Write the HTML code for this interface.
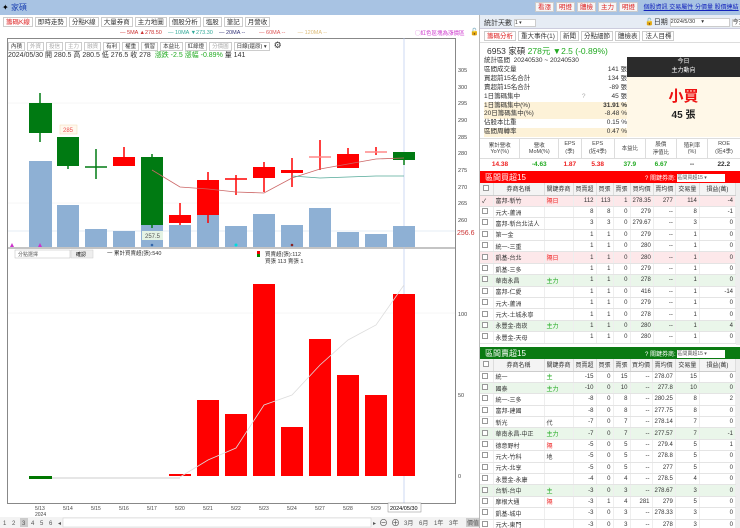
<!DOCTYPE html>
<html><head><meta charset="utf-8"><style>
*{margin:0;padding:0;box-sizing:border-box}
body{width:740px;height:528px;overflow:hidden;background:#fff;font-family:"Liberation Sans","Noto Sans CJK TC",sans-serif;font-size:7px;color:#333;position:relative}
.a{position:absolute}
.tab{display:inline-block;border:1px solid #ccc;padding:0 2px;height:10px;line-height:9px;margin-right:2px;font-size:6.5px;background:#fff}
table{border-collapse:collapse;font-size:6px}
.bt td{height:11.4px;border-bottom:1px solid #e4e4e4;border-right:1px solid #eee;text-align:right;padding:0 2px;white-space:nowrap}
.bt td.n{text-align:left}
.bt th{height:12px;font-weight:normal;border-right:1px solid #ddd;background:#f4f4f4;border-bottom:1px solid #ccc}
.pk td{background:#fde8ea}.gr td{background:#eaf6ea}
.cb{display:inline-block;width:6px;height:6px;border:1px solid #999;background:#fff}
</style></head><body>
<!-- top bars -->
<div class="a" style="left:0;top:0;width:740px;height:15px;background:#a8c3e3"></div>
<div class="a" style="left:2px;top:2px;font-size:8px;color:#000">✦ <span style="color:#1a3fb0">家碩</span></div>
<div class="a" style="left:0;top:15px;width:480px;height:13px;background:#fff;padding:2px 0 0 3px"><span class="tab" style="color:#d22">籌碼K線</span><span class="tab">即時走勢</span><span class="tab">分點K線</span><span class="tab">大量券商</span><span class="tab">主力地圖</span><span class="tab">個股分析</span><span class="tab">塩股</span><span class="tab">筆記</span><span class="tab">月營收</span></div>
<div class="a" style="left:120px;top:30px;font-size:5.5px;white-space:nowrap"><span style="color:#c33">— 5MA ▲278.50</span>&nbsp;&nbsp;&nbsp;&nbsp;<span style="color:#3a9">— 10MA ▼273.30</span>&nbsp;&nbsp;&nbsp;&nbsp;<span style="color:#337">— 20MA --</span>&nbsp;&nbsp;&nbsp;&nbsp;&nbsp;&nbsp;&nbsp;&nbsp;&nbsp;<span style="color:#d55">— 60MA --</span>&nbsp;&nbsp;&nbsp;&nbsp;&nbsp;&nbsp;&nbsp;&nbsp;<span style="color:#db7">— 120MA --</span></div>
<div class="a" style="left:415px;top:29px;font-size:5.5px;color:#c3c">◯紅色區塊為漲價區</div>
<div class="a" style="left:470px;top:28px;font-size:7px">🔓</div>
<svg class="a" style="left:0;top:0" width="480" height="528">
<rect x="7.5" y="38.5" width="448" height="465" fill="none" stroke="#888" stroke-width="1"/>
<line x1="7" y1="248" x2="456" y2="248" stroke="#888"/>
<line x1="404" y1="38" x2="404" y2="503" stroke="#b8c8ee" stroke-width="0.7"/>
<g stroke="#eee" stroke-width="0.5"><line x1="8" y1="103" x2="400" y2="103"/><line x1="8" y1="203" x2="400" y2="203"/><line x1="8" y1="313" x2="455" y2="313"/></g>
<line x1="8" y1="231" x2="455" y2="231" stroke="#cde" stroke-width="0.6"/>
<g fill="#8eb0d4">
<rect x="29" y="161" width="23" height="86"/><rect x="57" y="205" width="22" height="42"/><rect x="85" y="229" width="22" height="18"/><rect x="113" y="231" width="22" height="16"/><rect x="141" y="225" width="22" height="22"/><rect x="169" y="225" width="22" height="22"/><rect x="197" y="215" width="22" height="32"/><rect x="225" y="226" width="22" height="21"/><rect x="253" y="214" width="22" height="33"/><rect x="281" y="225" width="22" height="22"/><rect x="309" y="208" width="22" height="39"/><rect x="337" y="232" width="22" height="15"/><rect x="365" y="234" width="22" height="13"/><rect x="393" y="226" width="22" height="21"/>
</g>
<g stroke="#007a12" stroke-width="1.5" fill="#007a12">
<line x1="40" y1="93" x2="40" y2="142"/><rect x="29" y="103" width="23" height="30" stroke="none"/>
<line x1="68" y1="137" x2="68" y2="169"/><rect x="57" y="137" width="22" height="29" stroke="none"/>
<line x1="96" y1="149" x2="96" y2="179"/><line x1="85" y1="167" x2="107" y2="167"/>
<line x1="152" y1="154" x2="152" y2="228"/><rect x="141" y="157" width="22" height="68" stroke="none"/>
<line x1="404" y1="152" x2="404" y2="165"/><rect x="393" y="152" width="22" height="8" stroke="none"/>
</g>
<g stroke="#f00" stroke-width="1.5" fill="#f00">
<line x1="124" y1="147" x2="124" y2="166"/><rect x="113" y="157" width="22" height="9" stroke="none"/>
<line x1="180" y1="203" x2="180" y2="225"/><rect x="169" y="215" width="22" height="8" stroke="none"/>
<line x1="208" y1="172" x2="208" y2="223"/><rect x="197" y="180" width="22" height="35" stroke="none"/>
<line x1="236" y1="175" x2="236" y2="195"/><line x1="225" y1="179" x2="247" y2="179"/>
<line x1="264" y1="162" x2="264" y2="192"/><rect x="253" y="167" width="22" height="11" stroke="none"/>
<line x1="292" y1="158" x2="292" y2="187"/><rect x="281" y="170" width="22" height="3" stroke="none"/>
<line x1="320" y1="140" x2="320" y2="170"/><line x1="309" y1="157" x2="331" y2="157" stroke="#f88"/>
<line x1="348" y1="148" x2="348" y2="168"/><rect x="337" y="154" width="22" height="14" stroke="none"/>
<line x1="376" y1="147" x2="376" y2="155"/><line x1="365" y1="152" x2="387" y2="152" stroke="#f88"/>
</g>
<polyline points="152,170 180,187 208,189 236,192 264,193 292,178 320,169 348,164 376,159 404,158" fill="none" stroke="#c66" stroke-width="0.8"/>
<polyline points="292,176 320,178 348,177 376,176 404,176" fill="none" stroke="#5a9" stroke-width="0.7"/>
<rect x="60" y="125" width="17" height="9" fill="#fff8ee" stroke="#f3d9b0" stroke-width="0.5"/><text x="63" y="132" font-size="6" fill="#e55">285</text>
<rect x="142" y="231" width="21" height="9" fill="#e4f3e4"/><text x="145" y="238" font-size="6" fill="#555">257.5</text>
<g font-size="5.5" fill="#444"><text x="458" y="72">305</text><text x="458" y="89">300</text><text x="458" y="105">295</text><text x="458" y="122">290</text><text x="458" y="139">285</text><text x="458" y="155">280</text><text x="458" y="172">275</text><text x="458" y="189">270</text><text x="458" y="205">265</text><text x="458" y="222">260</text><text x="458" y="316">100</text><text x="458" y="397">50</text><text x="458" y="478">0</text></g>
<text x="457" y="235" font-size="7" fill="#c33">256.6</text>
<g fill="#c3c"><path d="M10,247 l2,-4 l2,4z"/><path d="M38,247 l2,-4 l2,4z"/></g>
<circle cx="152" cy="245" r="1.3" fill="#36a"/><circle cx="236" cy="245" r="1.5" fill="#0dd"/><circle cx="292" cy="245" r="1.3" fill="#822"/>
<rect x="15" y="250" width="55" height="8" fill="#fff" stroke="#bbb" stroke-width="0.5"/><text x="18" y="256" font-size="5" fill="#555">分點選擇</text>
<rect x="71" y="250" width="22" height="8" fill="#eee" stroke="#ccc" stroke-width="0.5"/><text x="76" y="256" font-size="5">確認</text>
<text x="107" y="255" font-size="5.5" fill="#333">一 累計買賣超(張):540</text>
<rect x="257" y="251" width="3" height="3" fill="#e00"/><rect x="257" y="254" width="3" height="3" fill="#080"/>
<text x="265" y="256" font-size="5.5" fill="#333">買賣超(張):112</text><text x="265" y="263" font-size="5.5" fill="#333">買張 113 賣張 1</text>
<g fill="#f00"><rect x="169" y="474" width="22" height="2"/><rect x="197" y="400" width="22" height="76"/><rect x="225" y="414" width="22" height="62"/><rect x="253" y="284" width="22" height="192"/><rect x="281" y="427" width="22" height="49"/><rect x="309" y="339" width="22" height="137"/><rect x="337" y="375" width="22" height="101"/><rect x="365" y="395" width="22" height="81"/><rect x="393" y="294" width="22" height="182"/></g>
<rect x="29" y="476" width="23" height="3" fill="#070"/>
<line x1="52" y1="478" x2="180" y2="478" stroke="#ccc" stroke-width="1"/>
<polyline points="180,477 208,460 236,448 264,405 292,395 320,365 348,340 376,325 404,285" fill="none" stroke="#ddd" stroke-width="0.8"/>
<g font-size="5" fill="#444"><text x="35" y="510">5/13</text><text x="35" y="516">2024</text><text x="63" y="510">5/14</text><text x="91" y="510">5/15</text><text x="119" y="510">5/16</text><text x="147" y="510">5/17</text><text x="175" y="510">5/20</text><text x="203" y="510">5/21</text><text x="231" y="510">5/22</text><text x="259" y="510">5/23</text><text x="287" y="510">5/24</text><text x="315" y="510">5/27</text><text x="343" y="510">5/28</text><text x="371" y="510">5/29</text></g>
<rect x="388" y="503" width="33" height="9" fill="#fff" stroke="#888" stroke-width="0.5"/><text x="390" y="510" font-size="5.5">2024/05/30</text>
<rect x="0" y="517" width="480" height="11" fill="#f3f3f3"/>
<g font-size="6" fill="#555"><text x="3" y="525">1</text><text x="12" y="525">2</text><rect x="20" y="518" width="8" height="9" fill="#ccc"/><text x="22" y="525">3</text><text x="31" y="525">4</text><text x="40" y="525">5</text><text x="49" y="525">6</text><text x="58" y="525">◂</text>
<rect x="63" y="518" width="308" height="9" fill="#fff" stroke="#ccc" stroke-width="0.5"/>
<text x="373" y="525">▸</text><text x="379" y="526" font-size="9">⊖</text><text x="391" y="526" font-size="9">⊕</text><text x="404" y="525">3月</text><text x="419" y="525">6月</text><text x="434" y="525">1年</text><text x="449" y="525">3年</text><rect x="466" y="518" width="14" height="9" fill="#ccc"/><text x="467" y="525">價值</text></g>
</svg>
<div class="a" style="left:7px;top:39px;width:230px;height:10px;padding:1px 0 0 1px;white-space:nowrap"><span class="tab" style="height:9px;font-size:5.5px">內積</span><span class="tab" style="height:9px;font-size:5.5px;color:#aaa">外資</span><span class="tab" style="height:9px;font-size:5.5px;color:#aaa">投信</span><span class="tab" style="height:9px;font-size:5.5px;color:#aaa">主力</span><span class="tab" style="height:9px;font-size:5.5px;color:#aaa">融資</span><span class="tab" style="height:9px;font-size:5.5px">有利</span><span class="tab" style="height:9px;font-size:5.5px">權重</span><span class="tab" style="height:9px;font-size:5.5px">慣習</span><span class="tab" style="height:9px;font-size:5.5px">本益比</span><span class="tab" style="height:9px;font-size:5.5px">紅綠燈</span><span class="tab" style="height:9px;font-size:5.5px;color:#aaa">分價圖</span><span class="tab" style="height:9px;font-size:5.5px">日線(還原) ▾</span> <span style="font-size:9px">⚙</span></div>
<div class="a" style="left:8px;top:50px;font-size:7px;white-space:nowrap">2024/05/30 開 280.5 高 280.5 低 276.5 收 278 &nbsp;<span style="color:#2a2">漲跌 -2.5 漲幅 -0.89%</span> 量 141</div>

<!-- RIGHT -->
<div class="a" style="left:535px;top:2px;font-size:6.5px;white-space:nowrap"><span class="tab" style="color:#d22;background:#f6f6f6">看漲</span><span class="tab" style="color:#d22;background:#f6f6f6">明燈</span><span class="tab" style="color:#d22;background:#f6f6f6">體檢</span><span class="tab" style="color:#d22;background:#f6f6f6">主力</span><span class="tab" style="color:#d22;background:#f6f6f6">明燈</span> &nbsp;<span style="color:#12b;text-decoration:underline;font-size:6px">個股資訊 交易屬性 分價量 股價連結</span></div>
<div class="a" style="left:480px;top:15px;width:260px;height:14px;background:#e6ecf4;border-bottom:1px solid #ccd"></div>
<div class="a" style="left:484px;top:18px;font-size:7px">統計天數 <span style="display:inline-block;width:22px;height:8px;background:#fff;border:1px solid #ccc;font-size:5px;vertical-align:middle">1 ▾</span></div>
<div class="a" style="left:645px;top:17px;font-size:7px;white-space:nowrap">🔓日期 <span style="display:inline-block;width:60px;height:9px;background:#fff;border:1px solid #ccc;font-size:5.5px;vertical-align:middle">2024/5/30 &nbsp;&nbsp;&nbsp;▾</span> <span style="font-size:6px;border:1px solid #ccc;background:#fff">今天</span></div>
<div class="a" style="left:484px;top:31px;white-space:nowrap"><span class="tab" style="color:#d22">籌碼分析</span><span class="tab">重大事件(1)</span><span class="tab">新聞</span><span class="tab">分點細節</span><span class="tab">體檢表</span><span class="tab">法人目標</span></div>
<div class="a" style="left:480px;top:42px;width:260px;height:15px;border-top:1px solid #ddd;padding:2px 0 0 7px;font-size:8.5px;white-space:nowrap">6953 家碩 <span style="color:#2a2">278元 ▼2.5 (-0.89%)</span></div>
<div class="a" style="left:484px;top:57px;width:143px;font-size:6.5px;line-height:8.9px">
<div>統計區間 &nbsp;20240530 ~ 20240530</div>
<div>區間成交量<span style="float:right">141 張</span></div>
<div>買超前15名合計<span style="float:right">134 張</span></div>
<div>賣超前15名合計<span style="float:right">-89 張</span></div>
<div>1日籌碼集中 <span style="color:#aaa;margin-left:60px">?</span><span style="float:right">45 張</span></div>
<div style="background:#fdf2d8">1日籌碼集中(%)<span style="float:right;font-weight:bold">31.91 %</span></div>
<div style="background:#fdf2d8">20日籌碼集中(%)<span style="float:right">-8.48 %</span></div>
<div>佔股本比重<span style="float:right">0.15 %</span></div>
<div style="background:#fdf2d8">區間周轉率<span style="float:right">0.47 %</span></div>
</div>
<div class="a" style="left:627px;top:57px;width:113px;height:20px;background:#2b2b2b;color:#fff;text-align:center;font-size:6px;line-height:9px;padding-top:1px">今日<br>主力動向</div>
<div class="a" style="left:627px;top:77px;width:113px;height:60px;background:#fff8e8;text-align:center"><div style="color:#e11;font-size:15px;font-weight:bold;margin-top:8px">小買</div><div style="font-size:10px;font-weight:bold;color:#222">45 張</div></div>
<div class="a" style="left:480px;top:138px;width:260px;height:33px;border-top:1px solid #ddd;font-size:5.5px">
<table style="width:260px;font-size:5.5px;text-align:center"><tr style="height:19px;color:#444"><td style="border-right:1px solid #ddd;border-bottom:1px solid #ddd">累計營收<br>YoY(%)</td><td style="border-right:1px solid #ddd;border-bottom:1px solid #ddd">營收<br>MoM(%)</td><td style="border-right:1px solid #ddd;border-bottom:1px solid #ddd">EPS<br>(季)</td><td style="border-right:1px solid #ddd;border-bottom:1px solid #ddd">EPS<br>(近4季)</td><td style="border-right:1px solid #ddd;border-bottom:1px solid #ddd">本益比</td><td style="border-right:1px solid #ddd;border-bottom:1px solid #ddd">股價<br>淨值比</td><td style="border-right:1px solid #ddd;border-bottom:1px solid #ddd">殖利率<br>(%)</td><td style="border-bottom:1px solid #ddd">ROE<br>(近4季)</td></tr>
<tr style="height:12px;font-size:6.5px;font-weight:bold"><td style="color:#e22">14.38</td><td style="color:#2a2">-4.63</td><td style="color:#e22">1.87</td><td style="color:#e22">5.38</td><td style="color:#2a2">37.9</td><td style="color:#2a2">6.67</td><td>--</td><td>22.2</td></tr></table></div>
<!-- buy table -->
<div class="a" style="left:480px;top:171px;width:260px;height:12px;background:#f00;color:#fff;font-size:8px;padding:1px 0 0 5px">區間買超15<span style="position:absolute;left:165px;top:2px;font-size:6px">? 關鍵券商: <span style="display:inline-block;width:48px;height:8px;background:#fff;color:#555;font-size:5px;vertical-align:middle">區間買超15 ▾</span></span></div>
<div class="a" style="left:480px;top:183px;width:256px;overflow:hidden;height:162px">
<table class="bt" style="width:256px"><colgroup><col style="width:13px"><col style="width:51px"><col style="width:29px"><col style="width:23px"><col style="width:17px"><col style="width:17px"><col style="width:22px"><col style="width:22px"><col style="width:24px"><col></colgroup>
<tr><th><span class="cb"></span></th><th>券商名稱</th><th>關鍵券商</th><th>買賣超</th><th>買張</th><th>賣張</th><th>買均價</th><th>賣均價</th><th>交易量</th><th>損益(萬)</th></tr>
<tr class="pk"><td class="n">✓</td><td class="n">富邦-新竹</td><td class="n" style="color:#e22">隔日</td><td>112</td><td>113</td><td>1</td><td>278.35</td><td>277</td><td>114</td><td>-4</td></tr>
<tr><td class="n"><span class="cb"></span></td><td class="n">元大-蘆洲</td><td></td><td>8</td><td>8</td><td>0</td><td>279</td><td>--</td><td>8</td><td>-1</td></tr>
<tr><td class="n"><span class="cb"></span></td><td class="n">富邦-新台北法人</td><td></td><td>3</td><td>3</td><td>0</td><td>279.67</td><td>--</td><td>3</td><td>0</td></tr>
<tr><td class="n"><span class="cb"></span></td><td class="n">第一金</td><td></td><td>1</td><td>1</td><td>0</td><td>279</td><td>--</td><td>1</td><td>0</td></tr>
<tr><td class="n"><span class="cb"></span></td><td class="n">統一-三重</td><td></td><td>1</td><td>1</td><td>0</td><td>280</td><td>--</td><td>1</td><td>0</td></tr>
<tr class="pk"><td class="n"><span class="cb"></span></td><td class="n">凱基-台北</td><td class="n" style="color:#e22">隔日</td><td>1</td><td>1</td><td>0</td><td>280</td><td>--</td><td>1</td><td>0</td></tr>
<tr><td class="n"><span class="cb"></span></td><td class="n">凱基-三多</td><td></td><td>1</td><td>1</td><td>0</td><td>279</td><td>--</td><td>1</td><td>0</td></tr>
<tr class="gr"><td class="n"><span class="cb"></span></td><td class="n">華南永昌</td><td class="n" style="color:#2a2">主力</td><td>1</td><td>1</td><td>0</td><td>278</td><td>--</td><td>1</td><td>0</td></tr>
<tr><td class="n"><span class="cb"></span></td><td class="n">富邦-仁愛</td><td></td><td>1</td><td>1</td><td>0</td><td>416</td><td>--</td><td>1</td><td>-14</td></tr>
<tr><td class="n"><span class="cb"></span></td><td class="n">元大-蘆洲</td><td></td><td>1</td><td>1</td><td>0</td><td>279</td><td>--</td><td>1</td><td>0</td></tr>
<tr><td class="n"><span class="cb"></span></td><td class="n">元大-土城永寧</td><td></td><td>1</td><td>1</td><td>0</td><td>278</td><td>--</td><td>1</td><td>0</td></tr>
<tr class="gr"><td class="n"><span class="cb"></span></td><td class="n">永豐金-南崁</td><td class="n" style="color:#2a2">主力</td><td>1</td><td>1</td><td>0</td><td>280</td><td>--</td><td>1</td><td>4</td></tr>
<tr><td class="n"><span class="cb"></span></td><td class="n">永豐金-天母</td><td></td><td>1</td><td>1</td><td>0</td><td>280</td><td>--</td><td>1</td><td>0</td></tr>
</table></div>
<div class="a" style="left:736px;top:183px;width:4px;height:162px;background:#eee"></div>
<!-- sell table -->
<div class="a" style="left:480px;top:347px;width:260px;height:12px;background:#0a7a12;color:#fff;font-size:8px;padding:1px 0 0 5px">區間賣超15<span style="position:absolute;left:165px;top:2px;font-size:6px">? 關鍵券商: <span style="display:inline-block;width:48px;height:8px;background:#fff;color:#555;font-size:5px;vertical-align:middle">區間賣超15 ▾</span></span></div>
<div class="a" style="left:480px;top:359px;width:256px;overflow:hidden;height:169px">
<table class="bt" style="width:256px"><colgroup><col style="width:13px"><col style="width:51px"><col style="width:29px"><col style="width:23px"><col style="width:17px"><col style="width:17px"><col style="width:22px"><col style="width:22px"><col style="width:24px"><col></colgroup>
<tr><th><span class="cb"></span></th><th>券商名稱</th><th>關鍵券商</th><th>買賣超</th><th>買張</th><th>賣張</th><th>買均價</th><th>賣均價</th><th>交易量</th><th>損益(萬)</th></tr>
<tr><td class="n"><span class="cb"></span></td><td class="n">統一</td><td class="n" style="color:#2a2">主</td><td>-15</td><td>0</td><td>15</td><td>--</td><td>278.07</td><td>15</td><td>0</td></tr>
<tr class="gr"><td class="n"><span class="cb"></span></td><td class="n">國泰</td><td class="n" style="color:#2a2">主力</td><td>-10</td><td>0</td><td>10</td><td>--</td><td>277.8</td><td>10</td><td>0</td></tr>
<tr><td class="n"><span class="cb"></span></td><td class="n">統一-三多</td><td></td><td>-8</td><td>0</td><td>8</td><td>--</td><td>280.25</td><td>8</td><td>2</td></tr>
<tr><td class="n"><span class="cb"></span></td><td class="n">富邦-建國</td><td></td><td>-8</td><td>0</td><td>8</td><td>--</td><td>277.75</td><td>8</td><td>0</td></tr>
<tr><td class="n"><span class="cb"></span></td><td class="n">新光</td><td class="n">代</td><td>-7</td><td>0</td><td>7</td><td>--</td><td>278.14</td><td>7</td><td>0</td></tr>
<tr class="gr"><td class="n"><span class="cb"></span></td><td class="n">華南永昌-中正</td><td class="n" style="color:#2a2">主力</td><td>-7</td><td>0</td><td>7</td><td>--</td><td>277.57</td><td>7</td><td>-1</td></tr>
<tr><td class="n"><span class="cb"></span></td><td class="n">德意野村</td><td class="n" style="color:#e22">隔</td><td>-5</td><td>0</td><td>5</td><td>--</td><td>279.4</td><td>5</td><td>1</td></tr>
<tr><td class="n"><span class="cb"></span></td><td class="n">元大-竹科</td><td class="n">地</td><td>-5</td><td>0</td><td>5</td><td>--</td><td>278.8</td><td>5</td><td>0</td></tr>
<tr><td class="n"><span class="cb"></span></td><td class="n">元大-北享</td><td></td><td>-5</td><td>0</td><td>5</td><td>--</td><td>277</td><td>5</td><td>0</td></tr>
<tr><td class="n"><span class="cb"></span></td><td class="n">永豐金-永康</td><td></td><td>-4</td><td>0</td><td>4</td><td>--</td><td>278.5</td><td>4</td><td>0</td></tr>
<tr class="gr"><td class="n"><span class="cb"></span></td><td class="n">台新-台中</td><td class="n" style="color:#2a2">主</td><td>-3</td><td>0</td><td>3</td><td>--</td><td>278.67</td><td>3</td><td>0</td></tr>
<tr><td class="n"><span class="cb"></span></td><td class="n">摩根大通</td><td class="n" style="color:#e22">隔</td><td>-3</td><td>1</td><td>4</td><td>281</td><td>279</td><td>5</td><td>0</td></tr>
<tr><td class="n"><span class="cb"></span></td><td class="n">凱基-城中</td><td></td><td>-3</td><td>0</td><td>3</td><td>--</td><td>278.33</td><td>3</td><td>0</td></tr>
<tr><td class="n"><span class="cb"></span></td><td class="n">元大-東門</td><td></td><td>-3</td><td>0</td><td>3</td><td>--</td><td>278</td><td>3</td><td>0</td></tr>
</table></div>
<div class="a" style="left:736px;top:359px;width:4px;height:169px;background:#eee"></div>
<div class="a" style="left:479px;top:15px;width:1px;height:513px;background:#bbb"></div>
</body></html>
